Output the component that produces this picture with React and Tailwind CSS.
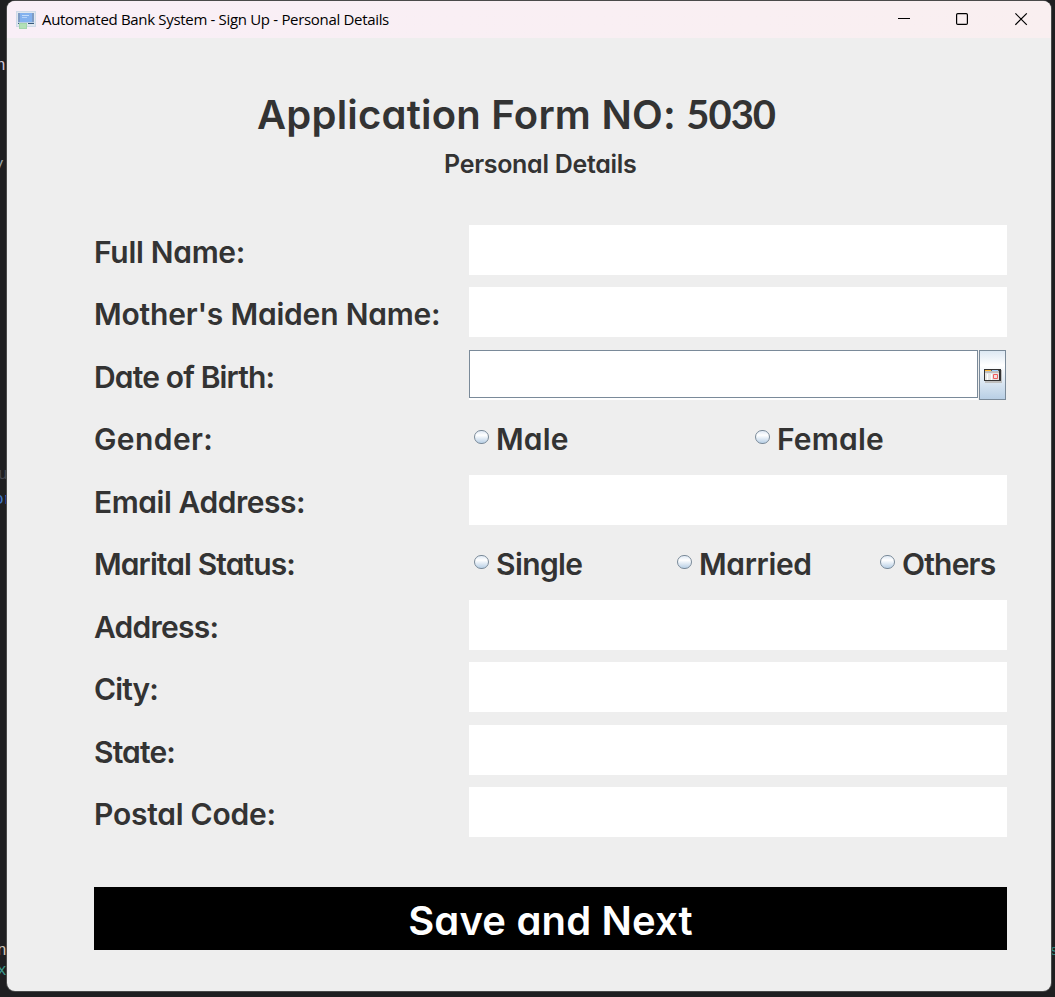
import React from "react";

const LABEL = "font-['Inter'] font-semibold [font-feature-settings:'cv11'] whitespace-nowrap text-[#333333]";

function AppIcon() {
  return (
    <svg width="20" height="20" viewBox="0 0 20 20" shapeRendering="crispEdges">
      <rect x="0" y="1" width="20" height="16" rx="1" fill="#cfdae8" />
      <rect x="1" y="2" width="18" height="14" fill="#dfe7ef" />
      <rect x="2" y="3" width="16" height="9" fill="#7f9cc4" />
      <rect x="4" y="3" width="12" height="9" fill="#83b1ee" />
      <rect x="6" y="5" width="7" height="1" fill="#c4dcfa" />
      <rect x="6" y="7" width="5" height="1" fill="#b4d2f8" />
      <rect x="2" y="12" width="16" height="1" fill="#b9cde4" />
      <rect x="2" y="13" width="16" height="1" fill="#37597a" />
      <rect x="10" y="13" width="2" height="1" fill="#e8eef4" />
      <rect x="3" y="13" width="8" height="6" fill="#a3d5ac" />
      <rect x="4" y="14" width="6" height="4" fill="#b3e0b7" />
    </svg>
  );
}

function CalendarIcon() {
  return (
    <svg width="18" height="14" viewBox="0 0 18 14" className="shrink-0">
      <rect x="1" y="1" width="17" height="13" fill="#bfbfbf" />
      <rect x="0" y="0" width="17" height="12" fill="#333333" />
      <rect x="1" y="1" width="14" height="10" fill="#e6e6e6" />
      <rect x="1" y="1" width="6" height="1" fill="#ffb733" />
      <rect x="7" y="1" width="1" height="1" fill="#555555" />
      <rect x="8" y="1" width="6" height="1" fill="#99ccff" />
      <rect x="14" y="1" width="1" height="1" fill="#555555" />
      <rect x="1" y="2" width="14" height="2" fill="#c0c0c0" />
      <rect x="3" y="5" width="1" height="6" fill="#ffffff" />
      <rect x="7" y="5" width="1" height="6" fill="#ffffff" />
      <rect x="9" y="5" width="5" height="5" rx="1" fill="#ee5c5c" />
      <rect x="10" y="6" width="3" height="3" fill="#f5dede" />
    </svg>
  );
}

function Row({ label, spacing, children }) {
  return (
    <div className="flex h-[50px]">
      <div className={`${LABEL} ${spacing} w-[375px] shrink-0 pt-[2px] text-[30px] leading-[50px]`}>{label}</div>
      {children}
    </div>
  );
}

function Field() {
  return <input className="h-[50px] w-[538px] bg-white px-2 text-xl outline-none" />;
}

function DateField() {
  return (
    <div className="flex h-[50px] w-[538px] gap-px">
      <div className="w-[509px] bg-white">
        <div className="h-[48px] border border-[#7a8a99] bg-white" />
      </div>
      <button className="flex h-[50px] w-[27px] items-start border border-[#7a8a99] bg-linear-to-b from-[#dde8f3] via-white via-30% to-[#b8cfe5] pt-[18px] pl-[4px]">
        <CalendarIcon />
      </button>
    </div>
  );
}

function Radio({ label, spacing, width }) {
  return (
    <label className={`${width} flex shrink-0 pl-[5px]`}>
      <span className="mt-[18px] h-[14px] w-[15px] shrink-0 rounded-full border border-[#7a8a99] bg-linear-to-b from-[#dfe9f4] via-white via-35% to-[#b8cfe5]" />
      <span className={`${LABEL} ${spacing} ml-[7px] pt-[2px] text-[30px] leading-[50px]`}>{label}</span>
    </label>
  );
}

const DASHES = [0, 1, 2, 3, 4, 5, 6, 7, 8, 9];

function EditorBehind() {
  return (
    <>
      <div className="absolute top-0 left-0 h-full w-[7px] overflow-hidden font-['Liberation_Mono'] text-[16px] leading-5">
        <span className="absolute top-[56px] -left-[4px] text-[#d0c8d8]">n.</span>
        <span className="absolute top-[155px] -left-[6px] text-[#9aa3a6]">y</span>
        <span className="absolute top-[465px] -left-[2px] text-[#45474f]">u</span>
        <span className="absolute top-[490px] -left-[6px] text-[#3f78c9]">or</span>
        <span className="absolute top-[941px] -left-[3px] text-[#d0c8b8]">n</span>
        <span className="absolute top-[961px] -left-[3px] text-[#3c9a90]">x</span>
        <div className="absolute top-[168px] left-[6px] flex flex-col gap-[29px]">
          {DASHES.map((i) => (
            <span key={i} className="h-px w-px bg-[#5c74b4]" />
          ))}
        </div>
      </div>
      <span className="absolute top-[941px] left-[1050px] font-['Liberation_Mono'] text-[14px] leading-5 text-[#2f8a80]">s</span>
    </>
  );
}

export default function App() {
  return (
    <div className="relative h-[997px] w-[1055px] overflow-hidden bg-[#1f1f21] pt-px pl-[7px]">
      <EditorBehind />
      <div className="relative flex h-[990px] w-[1044px] flex-col overflow-hidden rounded-lg bg-[#eeeeee] shadow-[0_0_0_1px_#4a4a4a]">
        <header className="flex h-[37px] shrink-0 items-center bg-linear-to-r from-[#f9eff7] to-[#f9eff0] pl-[9px]">
          <AppIcon />
          <span className="ml-[6px] flex-1 font-['Open_Sans'] text-[15px] tracking-[-0.32px] whitespace-nowrap text-black">
            Automated Bank System - Sign Up - Personal Details
          </span>
          <svg width="13" height="13" viewBox="0 0 13 13" className="mr-[45px]">
            <path d="M0 5.500h12" stroke="#000" strokeWidth="1" />
          </svg>
          <svg width="13" height="13" viewBox="0 0 13 13" className="mr-[46px]">
            <rect x="0.600" y="0.600" width="10.800" height="10.800" rx="1.200" fill="none" stroke="#000" strokeWidth="1.200" />
          </svg>
          <svg width="13" height="13" viewBox="0 0 13 13" className="mr-[23px]">
            <path d="M0.400 0.400l11.400 11.400M11.800 0.400L0.400 11.800" stroke="#000" strokeWidth="1.200" />
          </svg>
        </header>

        <main className="flex flex-col pl-[87px]">
          <h1 className={`${LABEL} mt-[52px] h-[50px] pl-[163px] text-[40px] leading-[50px] tracking-[0.22px]`}>
            Application Form NO: <span className="font-['Lato'] leading-none font-bold tracking-[-1px]">5030</span>
          </h1>
          <h2 className={`${LABEL} mt-[9px] pl-[350px] text-[25px] leading-[30px] tracking-[-0.3px]`}>
            Personal Details
          </h2>

          <form className="mt-[46px] flex flex-col gap-[12.49px]">
            <Row label="Full Name:" spacing="tracking-[-0.3px]"><Field /></Row>
            <Row label="Mother's Maiden Name:" spacing="tracking-[-0.2px]"><Field /></Row>
            <Row label="Date of Birth:" spacing="tracking-[-0.85px]"><DateField /></Row>
            <Row label="Gender:" spacing="tracking-[0.4px]">
              <Radio label="Male" spacing="tracking-[0.2px]" width="w-[281px]" />
              <Radio label="Female" spacing="tracking-[0.2px]" width="w-[200px]" />
            </Row>
            <Row label="Email Address:" spacing="tracking-[-0.45px]"><Field /></Row>
            <Row label="Marital Status:" spacing="tracking-[-0.9px]">
              <Radio label="Single" spacing="tracking-[-0.6px]" width="w-[203px]" />
              <Radio label="Married" spacing="tracking-[-0.35px]" width="w-[203px]" />
              <Radio label="Others" spacing="tracking-[-0.8px]" width="w-[132px]" />
            </Row>
            <Row label="Address:" spacing="tracking-[-0.75px]"><Field /></Row>
            <Row label="City:" spacing="tracking-[-0.9px]"><Field /></Row>
            <Row label="State:" spacing="tracking-[-0.85px]"><Field /></Row>
            <Row label="Postal Code:" spacing="tracking-[-0.25px]"><Field /></Row>
          </form>

          <button className="mt-[49.6px] h-[63px] w-[913px] bg-black pt-[4px] font-['Inter'] text-[40px] leading-[59px] font-semibold tracking-[0.15px] text-white [font-feature-settings:'cv11']">
            Save and Next
          </button>
        </main>
      </div>
    </div>
  );
}
